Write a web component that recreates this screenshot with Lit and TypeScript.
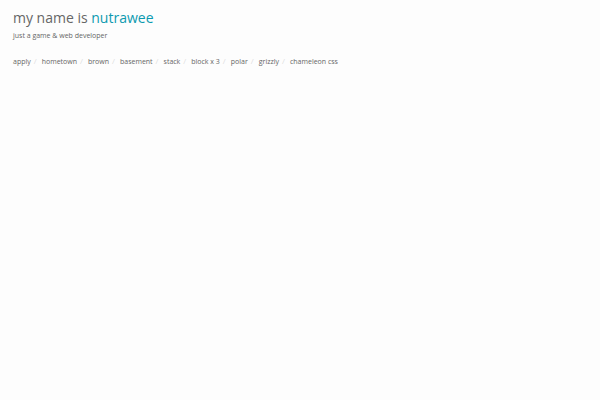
import { LitElement, html, css } from 'lit';
import { customElement } from 'lit/decorators.js';

const projects = [
  'apply',
  'hometown',
  'brown',
  'basement',
  'stack',
  'block x 3',
  'polar',
  'grizzly',
  'chameleon css'
];

@customElement('app-root')
export class AppRoot extends LitElement {
  static styles = css`
    :host {
      display: block;
      box-sizing: border-box;
      min-height: 100vh;
      padding: 8px 13px;
      background: #fdfdfd;
      color: #666;
      font-family: 'Open Sans', sans-serif;
      font-size: 7px;
      line-height: 14px;
    }
    h1 {
      margin: 0 0 1px;
      font-size: 14px;
      font-weight: 400;
      line-height: 20px;
    }
    .name {
      color: #0c9ab0;
    }
    .tagline {
      margin: 0 0 11px;
    }
    .projects {
      display: flex;
      flex-wrap: wrap;
      align-items: baseline;
      margin: 0;
      padding: 0;
      list-style: none;
    }
    .projects li:not(:last-child)::after {
      content: '/';
      padding: 0 5px 0 3px;
      color: #ddd;
      font-size: 8px;
    }
    a {
      color: inherit;
      text-decoration: none;
    }
    a:hover {
      color: #0c9ab0;
    }
  `;

  render() {
    return html`
      <header>
        <h1>my name is <span class="name">nutrawee</span></h1>
        <p class="tagline">just a game &amp; web developer</p>
      </header>
      <nav aria-label="Projects">
        <ul class="projects">
          ${projects.map((name) => html`<li><a href="#">${name}</a></li>`)}
        </ul>
      </nav>
    `;
  }
}
